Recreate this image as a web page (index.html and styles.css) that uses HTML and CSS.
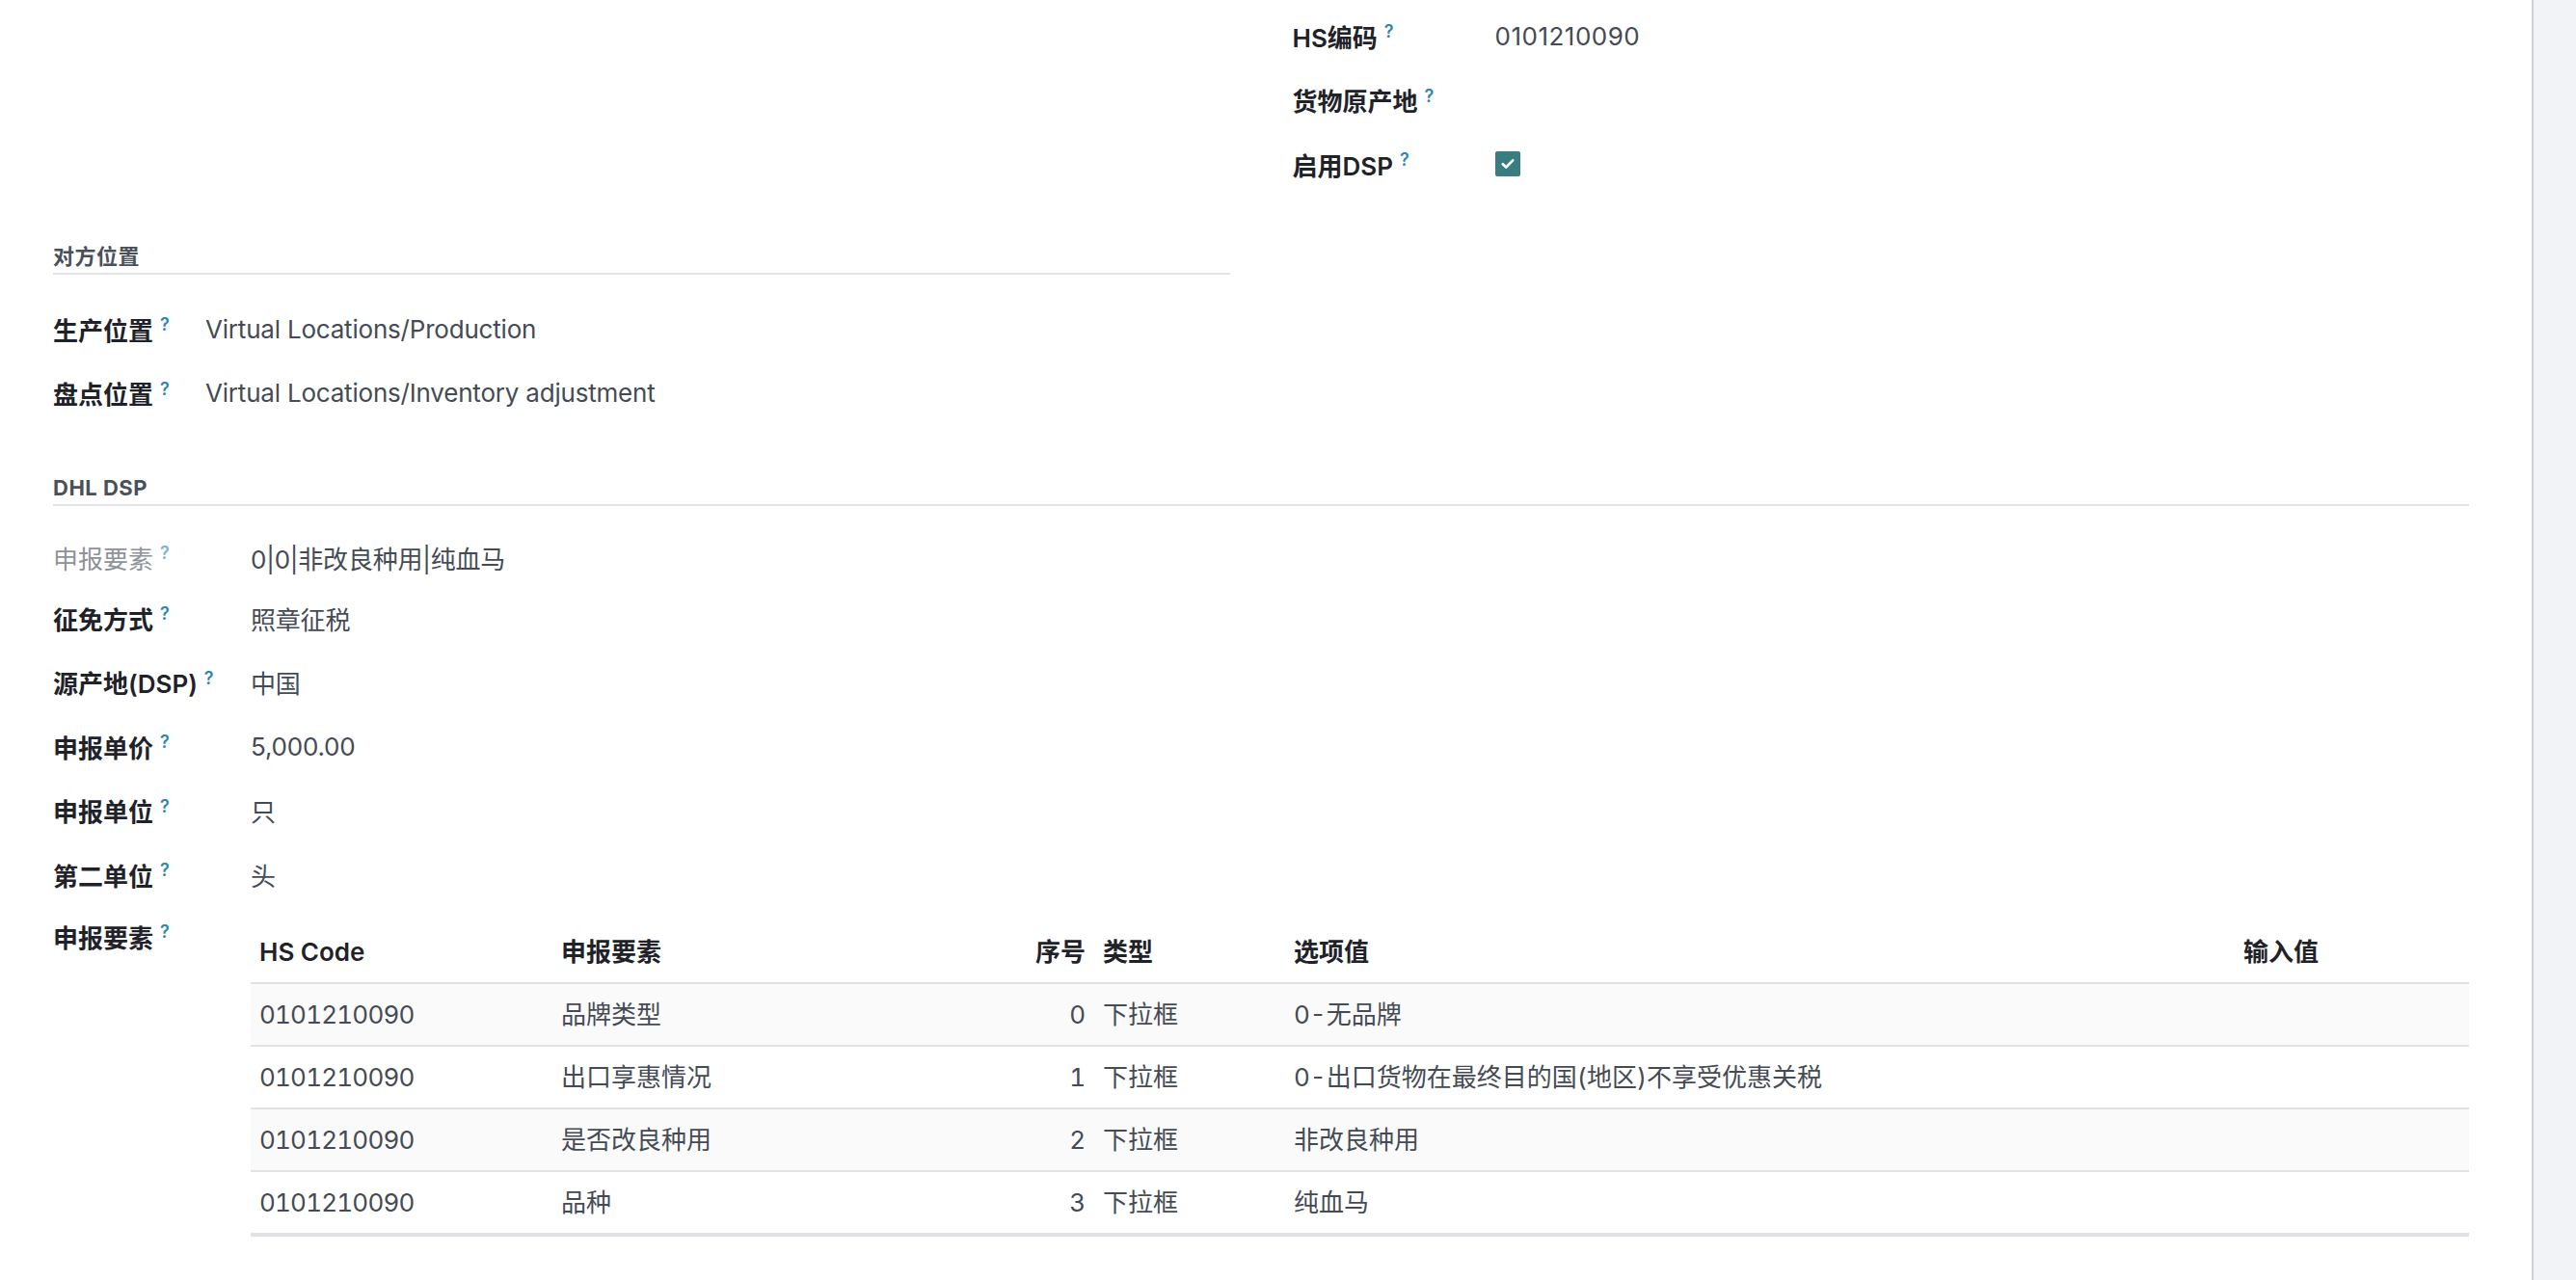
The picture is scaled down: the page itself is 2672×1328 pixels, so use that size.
FILE: index.html
```html
<!DOCTYPE html>
<html lang="zh">
<head>
  <meta charset="UTF-8">
  <title>产品类别</title>
  <link rel="stylesheet" href="styles.css">
</head>
<body>
  <div class="layout">
    <div class="sheet">
      <div class="cols">
        <div class="col"></div>
        <div class="col">
          <div class="group group-hs">
            <div class="lbl">HS编码<sup class="tip">?</sup></div>
            <div class="val val-code">0101210090</div>
            <div class="lbl">货物原产地<sup class="tip">?</sup></div>
            <div class="val"></div>
            <div class="lbl">启用DSP<sup class="tip">?</sup></div>
            <div class="val">
              <span class="check">
                <svg width="14" height="12" viewBox="0 0 14 12"><path d="M1.8 6.2l3.4 3.3 7-7.2" fill="none" stroke="#fff" stroke-width="2.6" stroke-linecap="round" stroke-linejoin="round"/></svg>
              </span>
            </div>
          </div>
        </div>
      </div>

      <div class="cols cols-loc">
        <div class="col">
          <div class="sep">对方位置</div>
          <div class="group group-loc">
            <div class="lbl">生产位置<sup class="tip">?</sup></div>
            <div class="val">Virtual Locations/Production</div>
            <div class="lbl">盘点位置<sup class="tip">?</sup></div>
            <div class="val">Virtual Locations/Inventory adjustment</div>
          </div>
        </div>
        <div class="col"></div>
      </div>

      <div class="sep sep-dsp">DHL DSP</div>
      <div class="group group-dsp">
        <div class="lbl lbl-ro">申报要素<sup class="tip">?</sup></div>
        <div class="val">0|0|非改良种用|纯血马</div>
        <div class="lbl">征免方式<sup class="tip">?</sup></div>
        <div class="val">照章征税</div>
        <div class="lbl">源产地(DSP)<sup class="tip">?</sup></div>
        <div class="val">中国</div>
        <div class="lbl">申报单价<sup class="tip">?</sup></div>
        <div class="val">5,000.00</div>
        <div class="lbl">申报单位<sup class="tip">?</sup></div>
        <div class="val">只</div>
        <div class="lbl">第二单位<sup class="tip">?</sup></div>
        <div class="val">头</div>
        <div class="lbl lbl-top">申报要素<sup class="tip">?</sup></div>
        <div class="val">
          <table class="list">
            <colgroup>
              <col class="c-code"><col class="c-elem"><col class="c-seq"><col class="c-type"><col class="c-opt"><col>
            </colgroup>
            <thead>
              <tr><th>HS Code</th><th>申报要素</th><th class="num">序号</th><th>类型</th><th>选项值</th><th>输入值</th></tr>
            </thead>
            <tbody>
              <tr><td class="code">0101210090</td><td>品牌类型</td><td class="num">0</td><td>下拉框</td><td>0-无品牌</td><td></td></tr>
              <tr><td class="code">0101210090</td><td>出口享惠情况</td><td class="num">1</td><td>下拉框</td><td>0-出口货物在最终目的国(地区)不享受优惠关税</td><td></td></tr>
              <tr><td class="code">0101210090</td><td>是否改良种用</td><td class="num">2</td><td>下拉框</td><td>非改良种用</td><td></td></tr>
              <tr><td class="code">0101210090</td><td>品种</td><td class="num">3</td><td>下拉框</td><td>纯血马</td><td></td></tr>
            </tbody>
          </table>
        </div>
      </div>
    </div>
    <div class="side"></div>
  </div>
</body>
</html>
```

FILE: styles.css
```css
body { margin: 0; background: #f2f3f7; font-family: "Inter", "Noto Sans CJK SC", sans-serif; font-size: 26px; color: #454b55; }
.layout { display: flex; min-height: 1328px; }
.sheet { flex: 0 0 2628px; box-sizing: border-box; background: #fff; border-right: 2px solid #cfd0d5; padding: 4px 65px 0 55px; min-height: 1328px; }
.side { flex: 1; background: #f2f3f7; }

.cols { display: grid; grid-template-columns: 1fr 1fr; column-gap: 65px; }
.cols-loc { margin-top: 47.5px; }

.group { display: grid; grid-auto-rows: 66.5px; align-items: center; }
.group-hs { grid-template-columns: 210px 1fr; }
.group-loc { grid-template-columns: 158px 1fr; margin-top: 23px; }
.group-dsp { grid-template-columns: 205px 1fr; grid-template-rows: 60px repeat(5, 66.5px) auto; margin-top: 23px; }

.lbl { color: #1f2229; font-weight: 600; white-space: nowrap; }
.lbl-ro { color: #8e9299; font-weight: 400; }
.lbl-ro .tip { color: #7fb3d1; }
.lbl-top { align-self: start; line-height: 66.5px; }
.val { white-space: nowrap; letter-spacing: -0.2px; }
.val-code { letter-spacing: 0.5px; }
.tip { font-size: 18px; font-weight: 600; color: #2e86b5; margin-left: 7px; vertical-align: super; line-height: 0; }

.sep { font-size: 22px; font-weight: 700; color: #4a5059; letter-spacing: 0.5px; line-height: 30px; padding-bottom: 2px; border-bottom: 2px solid #e3e4e7; }
.sep-dsp { margin-top: 50px; }

.check { display: flex; align-items: center; justify-content: center; width: 26px; height: 26px; border-radius: 2px; background: #387d80; }

.list { width: 100%; margin-top: 15.5px; table-layout: fixed; border-collapse: separate; border-spacing: 0; border-bottom: 2px solid #e2e2e6; letter-spacing: 0; }
.c-code { width: 313px; }
.c-elem { width: 470px; }
.c-seq { width: 92px; }
.c-type { width: 198px; }
.c-opt { width: 985px; }
.list th, .list td { padding: 0 9px; line-height: 63px; text-align: left; border-bottom: 2px solid #e2e2e6; white-space: nowrap; overflow: hidden; }
.list th { color: #1f2229; font-weight: 600; }
.list td { font-variant-numeric: tabular-nums; }
.list td.code { letter-spacing: -0.8px; }
.list .num { text-align: right; }
.list tbody tr:nth-child(odd) td { background: #fafafa; }
```
